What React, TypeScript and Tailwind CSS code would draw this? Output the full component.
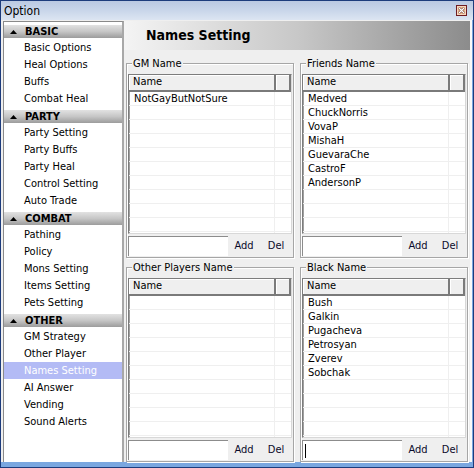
import React from "react";

const sections = [
  { title: "BASIC", items: ["Basic Options", "Heal Options", "Buffs", "Combat Heal"] },
  { title: "PARTY", items: ["Party Setting", "Party Buffs", "Party Heal", "Control Setting", "Auto Trade"] },
  { title: "COMBAT", items: ["Pathing", "Policy", "Mons Setting", "Items Setting", "Pets Setting"] },
  { title: "OTHER", items: ["GM Strategy", "Other Player", "Names Setting", "AI Answer", "Vending", "Sound Alerts"] },
];

const selected = "Names Setting";

function CloseButton() {
  return (
    <svg width="11" height="11" viewBox="0 0 11 11">
      <rect x="0.5" y="0.5" width="10" height="10" fill="#e9b48e" stroke="#6e1c22" />
      <rect x="1.5" y="1.5" width="8" height="8" fill="none" stroke="#f6d6bd" />
      <path d="M3 3 L8 8 M8 3 L3 8" stroke="#5a2a20" strokeWidth="2.4" />
      <path d="M3 3 L8 8 M8 3 L3 8" stroke="#ffffff" strokeWidth="1.3" />
    </svg>
  );
}

function Sidebar() {
  return (
    <div className="mt-[1px] w-[121px] border-t border-l border-[#8a8a8a] border-r-2 border-r-[#a8a8a8] bg-white">
      {sections.map((s) => (
        <div key={s.title}>
          <div className="h-[17px] pt-[3px]">
            <div className="flex h-[13px] items-center bg-gradient-to-b from-[#e2e2e2] via-[#c6c6c6] to-[#9c9c9c] pl-[6px]">
              <svg width="7" height="4" viewBox="0 0 7 4">
                <path d="M0 4 L3.5 0 L7 4 Z" fill="#000" />
              </svg>
              <span className="ml-[8px] text-[11px] font-bold leading-none text-black">{s.title}</span>
            </div>
          </div>
          {s.items.map((it) => (
            <div
              key={it}
              className={
                it === selected
                  ? "flex h-[17px] items-center bg-[#b3bbf5] pl-[20px] pt-[1px] text-[11px] text-white"
                  : "flex h-[17px] items-center pl-[20px] pt-[1px] text-[11px] text-black"
              }
            >
              {it}
            </div>
          ))}
        </div>
      ))}
    </div>
  );
}

function NameBox({ label, names, cursor }: { label: string; names: string[]; cursor?: boolean }) {
  const rows = [...names];
  while (rows.length < 11) rows.push("");
  return (
    <div className="relative h-[195px] border border-[#a6a6a6] px-[1px] pt-[10px] shadow-[inset_1px_1px_0_#ffffff,1px_1px_0_#ffffff]">
      <span className="absolute -top-[7px] left-[5px] bg-[#efefef] px-[1px] text-[11px] leading-[13px] text-black">
        {label}
      </span>
      <div className="flex h-[160px] w-[164px] flex-col overflow-hidden border border-t-[#7c7c7c] border-l-[#7c7c7c] border-r-[#d8d8d8] border-b-[#d8d8d8] bg-white shadow-[inset_1px_0_0_#a0a0a0]">
        <div className="flex h-[17px] shrink-0">
          <div className="flex w-[147px] items-center border-r-2 border-b-2 border-[#7a7a7a] bg-[#efefef] pl-[4px] text-[11px] shadow-[inset_1px_1px_0_#ffffff]">
            Name
          </div>
          <div className="flex-1 border-r-2 border-b-2 border-[#7a7a7a] bg-[#efefef] shadow-[inset_1px_1px_0_#ffffff]" />
        </div>
        {rows.map((n, i) => (
          <div key={i} className="flex h-[14px] shrink-0 border-b border-[#efefef]">
            <div className="flex w-[146px] items-center border-r border-[#efefef] pl-[5px] text-[11px] leading-none text-black">
              {n}
            </div>
            <div className="flex-1" />
          </div>
        ))}
      </div>
      <div className="flex h-[22px] items-end">
        <div className="flex h-[20px] w-[100px] items-center border-t border-l border-[#8c8c8c] bg-white pl-[2px]">
          {cursor && <span className="h-[14px] w-[1px] bg-black" />}
        </div>
        <button className="flex h-[20px] w-[32px] items-center justify-center text-[11px] text-[#0a0a2a]">Add</button>
        <button className="flex h-[20px] w-[32px] items-center justify-center text-[11px] text-[#0a0a2a]">Del</button>
      </div>
    </div>
  );
}

export default function App() {
  return (
    <div className="flex h-[468px] w-[474px] flex-col border border-[#1d3c7c] bg-[#7aa7e0] font-[family-name:'DejaVu_Sans_Condensed',Tahoma,'Liberation_Sans',sans-serif]">
      <div className="flex h-[19px] shrink-0 items-center justify-between bg-gradient-to-b from-[#bac9e2] via-[#c9d6ea] to-[#dce5f2] pl-[3px] pr-[6px]">
        <span className="text-[12px] text-black">Option</span>
        <CloseButton />
      </div>
      <div className="flex h-[442px] w-[471px] bg-[#efefef] pl-[2px]">
        <Sidebar />
        <div className="w-[346px] pt-[1px]">
          <div className="flex h-[29px] items-center bg-gradient-to-r from-[#f4f4f4] via-[#c8c8c8] to-[#8c8c8c] pl-[22px]">
            <span className="text-[14px] font-bold text-black">Names Setting</span>
          </div>
          <div className="mt-[13px] grid grid-cols-[168px_168px] gap-x-[6px] gap-y-[9px] px-[2px]">
            <NameBox label="GM Name" names={["NotGayButNotSure"]} />
            <NameBox
              label="Friends Name"
              names={["Medved", "ChuckNorris", "VovaP", "MishaH", "GuevaraChe", "CastroF", "AndersonP"]}
            />
            <NameBox label="Other Players Name" names={[]} />
            <NameBox
              label="Black Name"
              names={["Bush", "Galkin", "Pugacheva", "Petrosyan", "Zverev", "Sobchak"]}
              cursor
            />
          </div>
        </div>
        <div className="w-[2px] bg-[#fafafa]" />
      </div>
    </div>
  );
}
